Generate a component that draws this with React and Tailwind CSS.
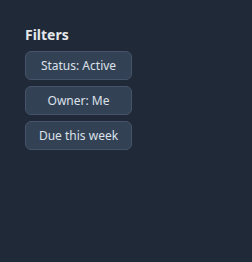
export default function App() {
  const filters = ["Status: Active", "Owner: Me", "Due this week"];
  return (
    <div
      className="min-h-[262px] w-full bg-[#1f2937] pl-[25px] pt-[25px]"
      style={{ fontFamily: '"Noto Sans", "Open Sans", sans-serif' }}
    >
      <h2 className="text-[14px] font-bold leading-[20px] text-[#e5e7eb]">Filters</h2>
      <div className="mt-[6px] flex flex-col gap-[6px]">
        {filters.map((f) => (
          <button
            key={f}
            className="h-[29px] w-[107px] rounded-[6px] border border-[#46536a] bg-[#334155] text-center text-[12px] text-[#dbe1e9]"
          >
            {f}
          </button>
        ))}
      </div>
    </div>
  );
}
